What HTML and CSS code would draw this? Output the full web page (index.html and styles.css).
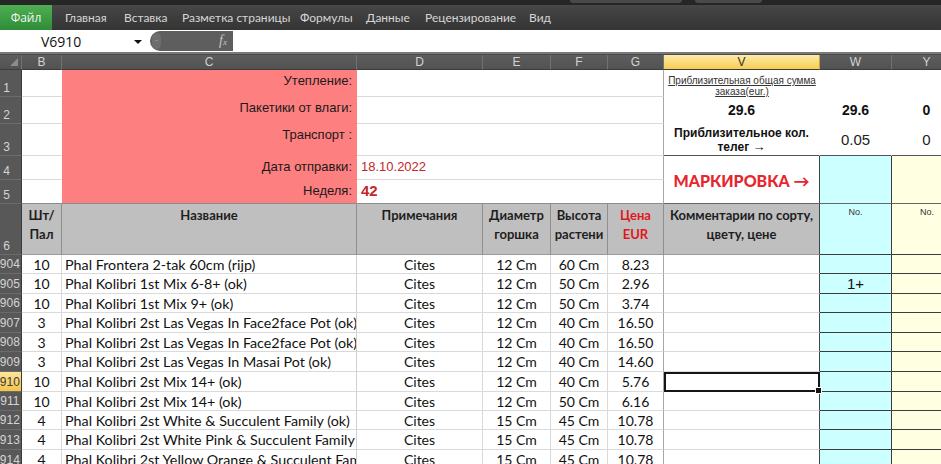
FILE: index.html
```html
<!DOCTYPE html>
<html lang="ru">
<head>
<meta charset="utf-8">
<title>Excel — лист заказа</title>
<link rel="stylesheet" href="styles.css">
</head>
<body>
<div class="app">
  <div class="menubar">
    <div class="titlestrip"><span class="tbox tb1"></span><span class="tbox tb2"></span></div>
    <div class="menurow">
      <div class="tab-file">Файл</div>
      <nav class="tabs">
        <span class="tab t1">Главная</span>
        <span class="tab t2">Вставка</span>
        <span class="tab t3">Разметка страницы</span>
        <span class="tab t4">Формулы</span>
        <span class="tab t5">Данные</span>
        <span class="tab t6">Рецензирование</span>
        <span class="tab t7">Вид</span>
      </nav>
    </div>
  </div>
  <div class="formulabar">
    <div class="namebox"><span class="ref">V6910</span><span class="drop"></span></div>
    <div class="fxzone"><span class="bubble"></span><span class="fx">f<span class="fxs">x</span></span></div>
    <div class="finput"></div>
  </div>
  <div class="gap"></div>
  <div class="viewport">
    <div class="sheet">
      <!-- column headers -->
      <div class="ch corner"><span class="tri"></span></div>
      <div class="ch">B</div>
      <div class="ch">C</div>
      <div class="ch">D</div>
      <div class="ch">E</div>
      <div class="ch">F</div>
      <div class="ch">G</div>
      <div class="ch sel">V</div>
      <div class="ch">W</div>
      <div class="ch">Y</div>

      <!-- row 1 -->
      <div class="rh">1</div>
      <div class="c bw"></div>
      <div class="c red">Утепление:</div>
      <div class="c dg"></div>
      <div class="c v1"><span>Приблизительная общая сумма</span><span>заказа(eur.)</span></div>
      <div class="c plain"></div>
      <div class="c plain"></div>

      <!-- row 2 -->
      <div class="rh">2</div>
      <div class="c bw"></div>
      <div class="c red">Пакетики от влаги:</div>
      <div class="c dg"></div>
      <div class="c plain sum">29.6</div>
      <div class="c plain sum">29.6</div>
      <div class="c plain sum">0</div>

      <!-- row 3 -->
      <div class="rh">3</div>
      <div class="c bw"></div>
      <div class="c red">Транспорт :</div>
      <div class="c dg"></div>
      <div class="c plain carts line"><span>Приблизительное кол.</span><span>телег <span class="arr">→</span></span></div>
      <div class="c plain qty line">0.05</div>
      <div class="c plain qty line">0</div>

      <!-- row 4 -->
      <div class="rh">4</div>
      <div class="c bw"></div>
      <div class="c red">Дата отправки:</div>
      <div class="c dg date">18.10.2022</div>
      <div class="c mark span2">МАРКИРОВКА →</div>
      <div class="c cyan tall span2"></div>
      <div class="c yellow tall span2"></div>

      <!-- row 5 -->
      <div class="rh">5</div>
      <div class="c bw r5"></div>
      <div class="c red r5">Неделя:</div>
      <div class="c dg week r5">42</div>

      <!-- row 6 (headers) -->
      <div class="rh">6</div>
      <div class="c hd">Шт/<br>Пал</div>
      <div class="c hd">Название</div>
      <div class="c hd">Примечания</div>
      <div class="c hd">Диаметр<br>горшка</div>
      <div class="c hd">Высота<br>растени</div>
      <div class="c hd price">Цена<br>EUR</div>
      <div class="c hd comm">Комментарии по сорту,<br>цвету, цене</div>
      <div class="c cyan no">No.</div>
      <div class="c yellow no">No.</div>

      <!-- data rows -->
      <div class="rh d">6904</div>
      <div class="c n">10</div>
      <div class="c name">Phal Frontera 2-tak 60cm (rijp)</div>
      <div class="c n">Cites</div><div class="c n">12 Cm</div><div class="c n">60 Cm</div><div class="c n g">8.23</div>
      <div class="c v"></div><div class="c cyan cell"></div><div class="c yellow cell"></div>

      <div class="rh d">6905</div>
      <div class="c n">10</div>
      <div class="c name">Phal Kolibri 1st Mix 6-8+ (ok)</div>
      <div class="c n">Cites</div><div class="c n">12 Cm</div><div class="c n">50 Cm</div><div class="c n g">2.96</div>
      <div class="c v"></div><div class="c cyan cell mk">1+</div><div class="c yellow cell"></div>

      <div class="rh d">6906</div>
      <div class="c n">10</div>
      <div class="c name">Phal Kolibri 1st Mix 9+ (ok)</div>
      <div class="c n">Cites</div><div class="c n">12 Cm</div><div class="c n">50 Cm</div><div class="c n g">3.74</div>
      <div class="c v"></div><div class="c cyan cell"></div><div class="c yellow cell"></div>

      <div class="rh d">6907</div>
      <div class="c n">3</div>
      <div class="c name">Phal Kolibri 2st Las Vegas In Face2face Pot (ok)</div>
      <div class="c n">Cites</div><div class="c n">12 Cm</div><div class="c n">40 Cm</div><div class="c n g">16.50</div>
      <div class="c v"></div><div class="c cyan cell"></div><div class="c yellow cell"></div>

      <div class="rh d">6908</div>
      <div class="c n">3</div>
      <div class="c name">Phal Kolibri 2st Las Vegas In Face2face Pot (ok)</div>
      <div class="c n">Cites</div><div class="c n">12 Cm</div><div class="c n">40 Cm</div><div class="c n g">16.50</div>
      <div class="c v"></div><div class="c cyan cell"></div><div class="c yellow cell"></div>

      <div class="rh d">6909</div>
      <div class="c n">3</div>
      <div class="c name">Phal Kolibri 2st Las Vegas In Masai Pot (ok)</div>
      <div class="c n">Cites</div><div class="c n">12 Cm</div><div class="c n">40 Cm</div><div class="c n g">14.60</div>
      <div class="c v"></div><div class="c cyan cell"></div><div class="c yellow cell"></div>

      <div class="rh d sel">6910</div>
      <div class="c n">10</div>
      <div class="c name">Phal Kolibri 2st Mix 14+ (ok)</div>
      <div class="c n">Cites</div><div class="c n">12 Cm</div><div class="c n">40 Cm</div><div class="c n g">5.76</div>
      <div class="c v active"></div><div class="c cyan cell"></div><div class="c yellow cell"></div>

      <div class="rh d">6911</div>
      <div class="c n">10</div>
      <div class="c name">Phal Kolibri 2st Mix 14+ (ok)</div>
      <div class="c n">Cites</div><div class="c n">12 Cm</div><div class="c n">50 Cm</div><div class="c n g">6.16</div>
      <div class="c v"></div><div class="c cyan cell"></div><div class="c yellow cell"></div>

      <div class="rh d">6912</div>
      <div class="c n">4</div>
      <div class="c name">Phal Kolibri 2st White &amp; Succulent Family (ok)</div>
      <div class="c n">Cites</div><div class="c n">15 Cm</div><div class="c n">45 Cm</div><div class="c n g">10.78</div>
      <div class="c v"></div><div class="c cyan cell"></div><div class="c yellow cell"></div>

      <div class="rh d">6913</div>
      <div class="c n">4</div>
      <div class="c name">Phal Kolibri 2st White Pink &amp; Succulent Family (ok)</div>
      <div class="c n">Cites</div><div class="c n">15 Cm</div><div class="c n">45 Cm</div><div class="c n g">10.78</div>
      <div class="c v"></div><div class="c cyan cell"></div><div class="c yellow cell"></div>

      <div class="rh d">6914</div>
      <div class="c n">4</div>
      <div class="c name">Phal Kolibri 2st Yellow Orange &amp; Succulent Family (ok)</div>
      <div class="c n">Cites</div><div class="c n">15 Cm</div><div class="c n">45 Cm</div><div class="c n g">10.78</div>
      <div class="c v"></div><div class="c cyan cell"></div><div class="c yellow cell"></div>
    </div>
  </div>
</div>
</body>
</html>
```

FILE: styles.css
```css
* { box-sizing: border-box; margin: 0; padding: 0; }
html, body { width: 941px; height: 464px; overflow: hidden; }
body { background: #fff; font-family: "Liberation Sans", Arial, sans-serif; }

.app { width: 941px; height: 464px; overflow: hidden; display: flex; flex-direction: column; }

/* ribbon tabs */
.menubar { height: 30px; flex: none; display: flex; flex-direction: column; background: #262626; }
.titlestrip { height: 5px; flex: none; display: flex; padding-left: 570px; gap: 13px; }
.tbox { height: 3px; background: #4a4a4a; border-radius: 0 0 3px 3px; }
.tb1 { width: 112px; }
.tb2 { width: 67px; }
.menurow {
  height: 25px; display: flex; align-items: stretch;
  background: linear-gradient(#474747, #3d3d3d 50%, #353535);
}
.tab-file {
  width: 52px; display: flex; align-items: center; justify-content: center;
  background: linear-gradient(#4fae52, #2f8c37);
  color: #f2f7f2; font-family: "Open Sans", sans-serif; font-size: 12px;
}
.tabs { display: flex; align-items: center; padding-left: 13px; }
.tab { color: #d6d6d6; font-family: Lato, "Open Sans", sans-serif; font-size: 12px; white-space: nowrap; }
.t1 { width: 59px; }
.t2 { width: 58px; }
.t3 { width: 118px; }
.t4 { width: 66px; }
.t5 { width: 59px; }
.t6 { width: 104px; }

/* formula bar */
.formulabar { height: 22px; flex: none; display: flex; background: #fff; padding-top: 1px; }
.namebox { width: 150px; display: flex; align-items: center; }
.ref { font-family: "Open Sans", sans-serif; font-size: 14px; color: #111; margin-left: 41px; }
.drop {
  width: 0; height: 0; margin-left: 53px;
  border-left: 4px solid transparent; border-right: 4px solid transparent; border-top: 4px solid #111;
}
.fxzone {
  width: 83px; height: 20px; background: #5e5e5e; border-radius: 10px 0 0 10px;
  display: flex; align-items: center; justify-content: space-between; padding: 0 6px 0 2px;
}
.bubble { width: 9px; height: 16px; border-radius: 8px; background: #6d6d6d; position: relative; }
.bubble::after { content: ""; position: absolute; left: 3px; top: 7px; width: 3px; height: 1px; background: #8a8a8a; }
.fx { font-family: "Liberation Serif", serif; font-style: italic; font-size: 14px; color: #c4c4c4; }
.fxs { font-size: 9px; }
.finput { flex: 1; background: #fff; }
.gap { height: 3px; flex: none; background: #7a7a7a; border-bottom: 1px solid #4a4a4a; }

/* grid */
.viewport { flex: 1; overflow: hidden; }
.sheet {
  display: grid; margin-left: -8px; width: 970px;
  grid-template-columns: 30px 40px 295px 126px 68px 57px 56px 156px 72px 70px;
  grid-template-rows: 15px 27px 27px 32px 24px 24px 51px 19px 20px 19px 20px 19px 20px 20px 19px 19px 20px 20px;
}
.ch {
  background: linear-gradient(#5d5d5d, #525252); color: #d2d2d2; font-size: 12px;
  display: flex; align-items: center; justify-content: center;
  border-right: 1px solid #727272; border-bottom: 1px solid #3c3c3c;
}
.ch.corner { justify-content: flex-end; align-items: flex-end; padding: 0 3px 3px 0; }
.tri { width: 0; height: 0; border-left: 8px solid transparent; border-bottom: 8px solid #8c8c8c; }
.ch.sel { background: linear-gradient(#fdeba8, #f7cd52); color: #333; border-right-color: #c9a63a; }

.rh {
  background: #585858; color: #d4d4d4; font-size: 12px;
  display: flex; justify-content: center; align-items: flex-end; padding-bottom: 1px;
  border-right: 1px solid #3a3a3a; border-bottom: 1px solid #6b6b6b; overflow: hidden; white-space: nowrap;
}
.rh.d { align-items: center; padding-bottom: 0; }
.rh.sel { background: linear-gradient(#fde59a, #f4c447); color: #3a3a3a; }

.c {
  border-right: 1px solid #dadada; border-bottom: 1px solid #dadada;
  font-family: Lato, sans-serif; font-size: 14px; color: #111;
  display: flex; align-items: center; overflow: hidden; white-space: nowrap; background: #fff;
}
.span2 { grid-row: span 2; }

/* top area */
.bw { border-right: none; }
.red {
  background: #fe7f80; border-right-color: #fe7f80; border-bottom-color: #fe7f80;
  justify-content: flex-end; align-items: flex-start; padding: 3px 4px 0 0;
  font-family: "Liberation Sans", Arial, sans-serif; font-size: 13px; color: #1a1a1a;
}
.r5 { border-bottom-color: #8c8c8c; }
.dg {
  grid-column: span 4; border-right-color: #a8a8a8; align-items: flex-start; padding: 3px 0 0 4px;
  font-family: "Liberation Sans", Arial, sans-serif; font-size: 13px; color: #c3262c;
}
.dg.r5 { border-bottom-color: #8c8c8c; }
.week { font-weight: bold; font-size: 15px; padding-top: 2px; }
.plain { border-color: #fff; justify-content: center; font-family: "Liberation Sans", Arial, sans-serif; }
.v1 {
  border: none; flex-direction: column; justify-content: flex-start; align-items: center; padding-top: 5px;
  font-family: "Liberation Sans", Arial, sans-serif; font-size: 10px; line-height: 11px; color: #333;
  text-decoration: underline;
}
.sum { font-weight: bold; font-size: 14px; }
.carts { flex-direction: column; font-weight: bold; font-size: 12px; line-height: 14px; padding-top: 1px; }
.arr { font-size: 13px; }
.qty { font-size: 15px; color: #222; }
.line { border-bottom: 1px solid #555; }
.mark {
  justify-content: center; border-right: 1px solid #444; border-bottom: 1px solid #666;
  font-weight: 900; font-size: 16px; color: #e8262d; padding-top: 2px;
}
.cyan { background: #ccffff; border-right: 1px solid #3c3c3c; border-bottom: 1px solid #3c3c3c; }
.yellow { background: #ffffe1; border-right: none; border-bottom: 1px solid #3c3c3c; }
.tall { border-bottom-color: #666; }

/* header row */
.hd {
  background: #bfbfbf; border-right: 1px solid #8f8f8f; border-bottom: 1px solid #9a9a9a;
  flex-direction: column; justify-content: flex-start; align-items: center; text-align: center;
  padding-top: 2px; font-weight: bold; font-size: 13px; line-height: 19px; color: #1e1e1e; white-space: nowrap;
}
.hd.price { color: #e0181e; }
.hd.comm { border-right: 1px solid #444; }
.no {
  align-items: flex-start; justify-content: center; padding-top: 3px;
  font-family: "Liberation Sans", Arial, sans-serif; font-size: 9px; color: #333;
}

/* data rows */
.n { justify-content: center; }
.name { padding-left: 3px; border-right-color: #d0d0d0; font-size: 14.3px; }
.g { border-right-color: #a8a8a8; }
.v { border-right: 1px solid #444; }
.mk { justify-content: center; font-family: "Liberation Sans", Arial, sans-serif; font-size: 15px; color: #111; }
.active { position: relative; overflow: visible; z-index: 2; }
.active::after {
  content: ""; position: absolute; left: 0; top: 0; right: -1px; bottom: -1px; border: 2px solid #151515;
}
.active::before {
  content: ""; position: absolute; right: -3px; bottom: -3px; width: 5px; height: 5px;
  background: #151515; border: 1px solid #fff; z-index: 3;
}
```
